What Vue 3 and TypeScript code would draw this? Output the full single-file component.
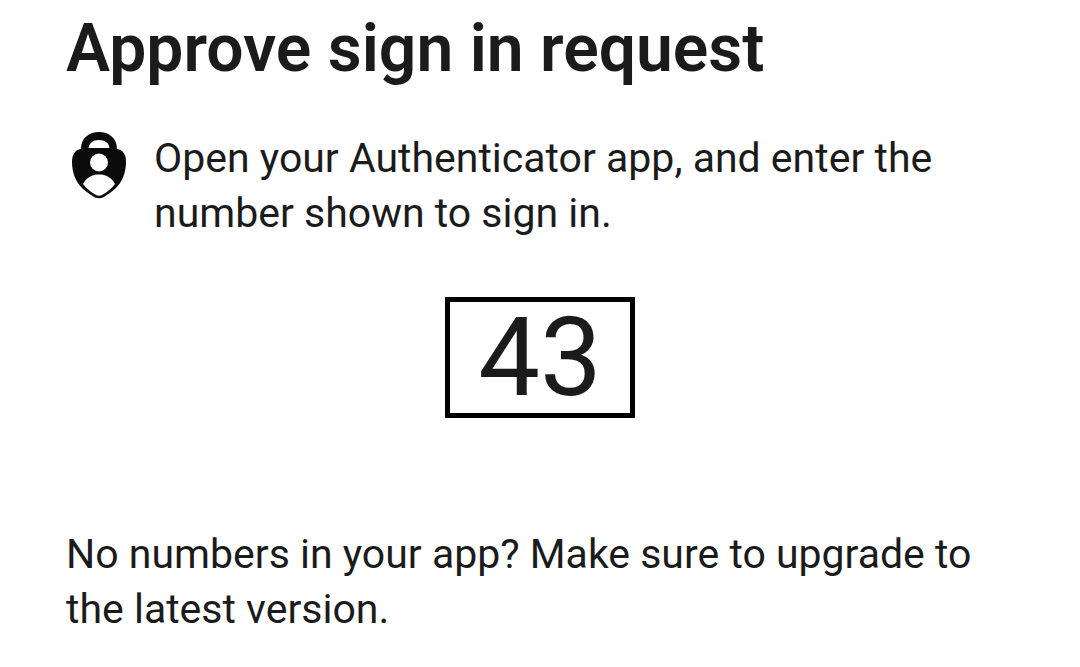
<script setup lang="ts">
const code = 43
</script>

<template>
  <main class="page">
    <h1 class="title">Approve sign in request</h1>
    <div class="prompt">
      <svg class="icon" viewBox="0 0 56 68" aria-hidden="true">
        <path d="M28 1C18 1 10 7 10 18C4 19 1 23 1 31C1 42 5 51 11 57C15 61 20 64 24 66.500Q28 68 32 66.500C36 64 41 61 45 57C51 51 55 42 55 31C55 23 52 19 46 18C46 7 38 1 28 1Z" fill="#0b0b0b" />
        <path d="M17.500 17C18 12 22 9 28 9C34 9 38 12 38.500 17Z" fill="#fff" />
        <circle cx="28" cy="31.500" r="9" fill="#fff" />
        <path d="M12 53C16 46 21 43.500 28 43.500C35 43.500 40 46 44 53C41 57 35 62 31 64Q28 65.500 25 64C21 62 15 57 12 53Z" fill="#fff" />
      </svg>
      <p class="text">Open your Authenticator app, and enter the number shown to sign in.</p>
    </div>
    <div class="number">{{ code }}</div>
    <p class="text">No numbers in your app? Make sure to upgrade to the latest version.</p>
  </main>
</template>

<style>
body {
  margin: 0;
  background: #fff;
}
</style>

<style scoped>
.page {
  display: flex;
  flex-direction: column;
  padding: 9px 66px 30px;
  color: #1b1b1b;
  font-family: Roboto, sans-serif;
}
.title {
  margin: 0;
  font-size: 66px;
  line-height: 80px;
  font-weight: 600;
}
.prompt {
  display: flex;
  gap: 27px;
  margin-top: 42px;
  padding-left: 5px;
}
.icon {
  flex: none;
  width: 56px;
  height: 68px;
}
.text {
  margin: 0;
  font-size: 41px;
  line-height: 55px;
}
.number {
  align-self: center;
  margin: 56px 0 109px;
  padding: 0 28px;
  border: 5px solid #000;
  font-size: 110px;
  line-height: 111px;
}
</style>
